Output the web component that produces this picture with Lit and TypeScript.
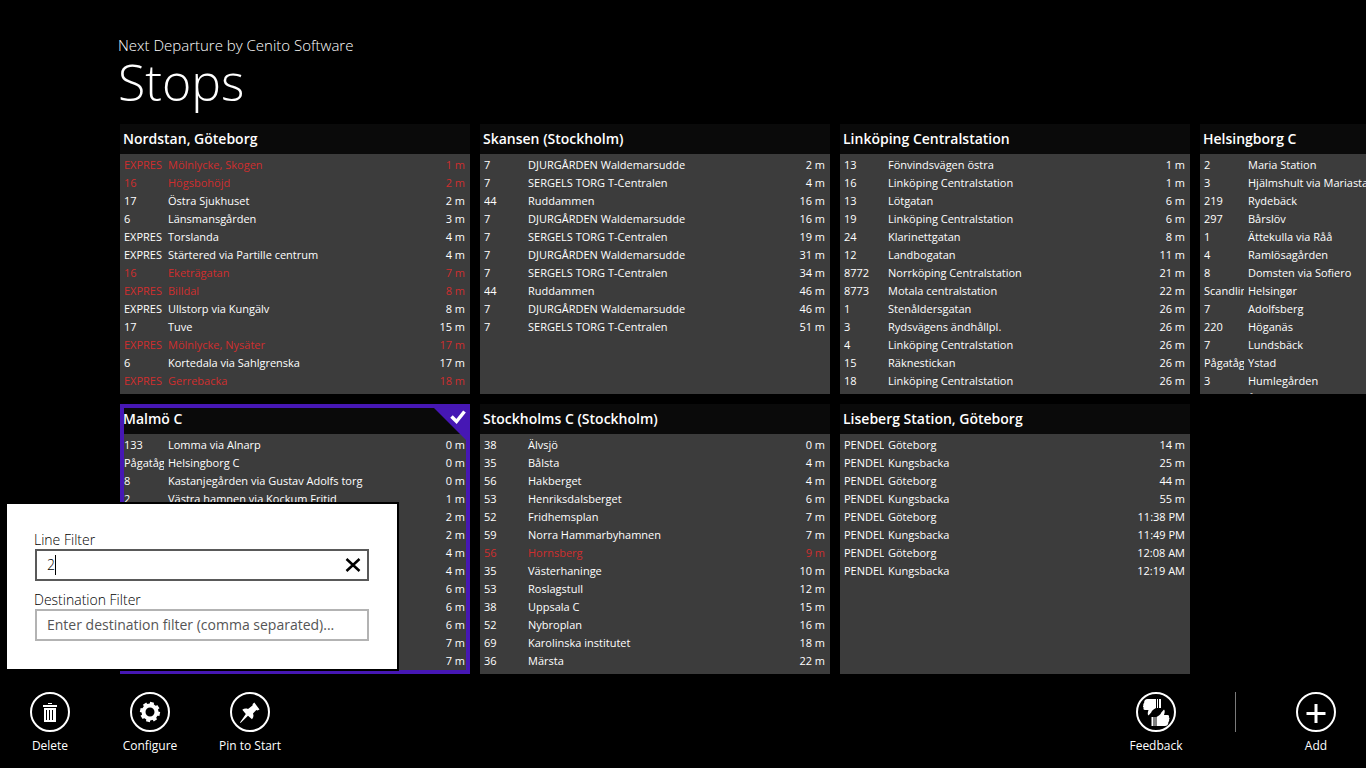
import { LitElement, html, css, svg, nothing } from "lit";
import { customElement, property } from "lit/decorators.js";
import { classMap } from "lit/directives/class-map.js";

interface Departure {
  line: string;
  destination: string;
  time: string;
  filtered?: boolean;
}

interface Stop {
  name: string;
  selected?: boolean;
  departures: Departure[];
}

// Each row reads "line|destination|time"; a leading "!" marks a highlighted departure.
const parse = (rows: string): Departure[] =>
  rows
    .trim()
    .split("\n")
    .map((row) => {
      const text = row.trim();
      const filtered = text.startsWith("!");
      const [line, destination, time] = (filtered ? text.slice(1) : text).split("|");
      return { line, destination, time, filtered };
    });

const STOPS: Stop[] = [
  {
    name: "Nordstan, Göteborg",
    departures: parse(`
      !EXPRES|Mölnlycke, Skogen|1 m
      !16|Högsbohöjd|2 m
      17|Östra Sjukhuset|2 m
      6|Länsmansgården|3 m
      EXPRES|Torslanda|4 m
      EXPRES|Stärtered via Partille centrum|4 m
      !16|Eketrägatan|7 m
      !EXPRES|Billdal|8 m
      EXPRES|Ullstorp via Kungälv|8 m
      17|Tuve|15 m
      !EXPRES|Mölnlycke, Nysäter|17 m
      6|Kortedala via Sahlgrenska|17 m
      !EXPRES|Gerrebacka|18 m`),
  },
  {
    name: "Malmö C",
    selected: true,
    departures: parse(`
      133|Lomma via Alnarp|0 m
      Pågatåg|Helsingborg C|0 m
      8|Kastanjegården via Gustav Adolfs torg|0 m
      2|Västra hamnen via Kockum Fritid|1 m
      ||2 m
      ||2 m
      ||4 m
      ||4 m
      ||6 m
      ||6 m
      ||6 m
      ||7 m
      ||7 m`),
  },
  {
    name: "Skansen (Stockholm)",
    departures: parse(`
      7|DJURGÅRDEN Waldemarsudde|2 m
      7|SERGELS TORG T-Centralen|4 m
      44|Ruddammen|16 m
      7|DJURGÅRDEN Waldemarsudde|16 m
      7|SERGELS TORG T-Centralen|19 m
      7|DJURGÅRDEN Waldemarsudde|31 m
      7|SERGELS TORG T-Centralen|34 m
      44|Ruddammen|46 m
      7|DJURGÅRDEN Waldemarsudde|46 m
      7|SERGELS TORG T-Centralen|51 m`),
  },
  {
    name: "Stockholms C (Stockholm)",
    departures: parse(`
      38|Älvsjö|0 m
      35|Bålsta|4 m
      56|Hakberget|4 m
      53|Henriksdalsberget|6 m
      52|Fridhemsplan|7 m
      59|Norra Hammarbyhamnen|7 m
      !56|Hornsberg|9 m
      35|Västerhaninge|10 m
      53|Roslagstull|12 m
      38|Uppsala C|15 m
      52|Nybroplan|16 m
      69|Karolinska institutet|18 m
      36|Märsta|22 m`),
  },
  {
    name: "Linköping Centralstation",
    departures: parse(`
      13|Fönvindsvägen östra|1 m
      16|Linköping Centralstation|1 m
      13|Lötgatan|6 m
      19|Linköping Centralstation|6 m
      24|Klarinettgatan|8 m
      12|Landbogatan|11 m
      8772|Norrköping Centralstation|21 m
      8773|Motala centralstation|22 m
      1|Stenåldersgatan|26 m
      3|Rydsvägens ändhållpl.|26 m
      4|Linköping Centralstation|26 m
      15|Räknestickan|26 m
      18|Linköping Centralstation|26 m`),
  },
  {
    name: "Liseberg Station, Göteborg",
    departures: parse(`
      PENDEL|Göteborg|14 m
      PENDEL|Kungsbacka|25 m
      PENDEL|Göteborg|44 m
      PENDEL|Kungsbacka|55 m
      PENDEL|Göteborg|11:38 PM
      PENDEL|Kungsbacka|11:49 PM
      PENDEL|Göteborg|12:08 AM
      PENDEL|Kungsbacka|12:19 AM`),
  },
  {
    name: "Helsingborg C",
    departures: parse(`
      2|Maria Station|
      3|Hjälmshult via Mariastaden|
      219|Rydebäck|
      297|Bårslöv|
      1|Ättekulla via Råå|
      4|Ramlösagården|
      8|Domsten via Sofiero|
      Scandlin|Helsingør|
      7|Adolfsberg|
      220|Höganäs|
      7|Lundsbäck|
      Pågatåg|Ystad|
      3|Humlegården|
      |Ångelholm|`),
  },
];

const THUMB =
  "M20 7v9c-2.500 1.200-4 2.500-4.800 4.500l-2.700 3c-1.200-1.200-.8-3.200 0-5.500H9c-1.500-.2-2-1.300-1.300-2.300C6.800 15 6.800 14 7.500 13.300c-.4-.8-.2-1.700.6-2.300C8 8.500 9.500 7 11.500 7zM21 7h1v9h-1zM23 7h2v9h-2z";

const ICONS = {
  delete: svg`
    <path d="M18 11h4v1h-4zM13 13h14v2H13z" />
    <path fill-rule="evenodd" d="M14 16h12v14H14zM16 18v10h1V18zM19 18v10h1V18zM22 18v10h1V18z" />`,
  configure: svg`
    <circle cx="20" cy="20" r="6.500" fill="none" stroke="currentColor" stroke-width="4" />
    ${[0, 45, 90, 135, 180, 225, 270, 315].map(
      (angle) => svg`<path d="M18 10h4v4h-4z" transform=${`rotate(${angle + 12} 20 20)`} />`
    )}`,
  pin: svg`
    <path d="M24.300 10.500l5.200 7-2 .9-1.200-.5-3.300 3.600c.9 2.200.5 4-1 5.800l-4-3.500-7.500 7.200-.5-.5L15.800 22l-3.500-4.200c1.700-1.300 3.700-1.500 5.700-.8l4.500-3.500.2-1.600z" />`,
  feedback: svg`
    <path d=${THUMB} />
    <path d=${THUMB} transform="rotate(180 20.250 20.500)" />`,
  add: svg`<path d="M18.500 12h3v8h8v3h-8v8h-3v-8h-8v-3h8z" />`,
};

@customElement("stop-tile")
export class StopTile extends LitElement {
  @property({ attribute: false }) stop!: Stop;

  static styles = css`
    :host {
      display: block;
      min-width: 0;
    }
    .tile {
      position: relative;
      height: 100%;
      display: flex;
      flex-direction: column;
      overflow: hidden;
      background: #3c3c3c;
    }
    .name {
      flex: none;
      margin: 0;
      padding: 0 3px;
      background: #0a0a0a;
      font-size: 14px;
      font-weight: 600;
      line-height: 30px;
    }
    .board {
      width: 100%;
      margin-top: 2px;
      border-collapse: collapse;
      table-layout: fixed;
      font-size: 11px;
    }
    .cell {
      height: 18px;
      padding: 0;
      line-height: 18px;
      text-align: left;
      white-space: nowrap;
      overflow: hidden;
    }
    .line {
      width: 40px;
      padding: 0 0 0 4px;
    }
    .clip {
      display: block;
      width: 40px;
      overflow: hidden;
    }
    .destination {
      padding-left: 4px;
    }
    .time {
      width: 62px;
      padding-right: 5px;
      text-align: right;
    }
    .filtered {
      color: #cf2e2e;
    }
    .selected::after {
      content: "";
      position: absolute;
      inset: 0;
      border: 4px solid #4617b4;
      pointer-events: none;
    }
    .check {
      position: absolute;
      top: 0;
      right: 0;
      width: 40px;
      height: 40px;
    }
  `;

  render() {
    const { name, selected, departures } = this.stop;
    return html`
      <article class=${classMap({ tile: true, selected: !!selected })}>
        <h2 class="name">${name}</h2>
        ${selected
          ? html`<svg class="check" viewBox="0 0 40 40" aria-hidden="true">
              <path d="M0 0H40V40z" fill="#4617b4" />
              <path d="M21.500 12.500l5 5L34.500 7.500" fill="none" stroke="#fff" stroke-width="3.500" />
            </svg>`
          : nothing}
        <table class="board" aria-label=${name}>
          <tbody>
            ${departures.map(
              (d) => html`
                <tr class=${classMap({ filtered: !!d.filtered })}>
                  <td class="cell line"><span class="clip">${d.line}</span></td>
                  <td class="cell destination">${d.destination}</td>
                  <td class="cell time">${d.time}</td>
                </tr>
              `
            )}
          </tbody>
        </table>
      </article>
    `;
  }
}

@customElement("command-button")
export class CommandButton extends LitElement {
  @property() icon: keyof typeof ICONS = "add";
  @property() label = "";

  static styles = css`
    :host {
      display: block;
      width: 100px;
    }
    .command {
      display: flex;
      flex-direction: column;
      align-items: center;
      width: 100%;
      padding: 0;
      border: 0;
      background: none;
      color: #fff;
      font: inherit;
      line-height: 18px;
      white-space: nowrap;
    }
    .glyph {
      width: 40px;
      height: 40px;
      margin-bottom: 5px;
      fill: currentColor;
    }
  `;

  render() {
    return html`
      <button class="command" type="button">
        <svg class="glyph" viewBox="0 0 40 40" aria-hidden="true">
          <circle cx="20" cy="20" r="19" fill="none" stroke="currentColor" stroke-width="2" />
          ${ICONS[this.icon]}
        </svg>
        ${this.label}
      </button>
    `;
  }
}

@customElement("filter-flyout")
export class FilterFlyout extends LitElement {
  static styles = css`
    :host {
      display: block;
    }
    .flyout {
      box-sizing: border-box;
      width: 394px;
      padding: 27px 28px 28px 27px;
      border: 2px solid #000;
      background: #fff;
      color: #000;
      font-size: 14px;
      font-weight: 300;
    }
    .label {
      display: block;
      line-height: 18px;
    }
    .field {
      position: relative;
      display: flex;
      align-items: center;
      box-sizing: border-box;
      height: 32px;
      margin-left: 1px;
      border: 2px solid #b3b3b3;
    }
    .field + .label {
      margin-top: 10px;
    }
    .active {
      border-color: #595959;
    }
    .input {
      flex: 1;
      min-width: 0;
      padding: 0 10px;
      border: 0;
      outline: 0;
      background: none;
      color: #000;
      font: inherit;
      line-height: 20px;
      caret-color: transparent;
    }
    .input::placeholder {
      color: #555;
      font-weight: 400;
      opacity: 1;
    }
    .caret {
      position: absolute;
      left: 18px;
      top: 4px;
      width: 1px;
      height: 20px;
      background: #000;
    }
    .clear {
      display: flex;
      padding: 0 6px;
      border: 0;
      background: none;
    }
    .cross {
      width: 16px;
      height: 16px;
    }
  `;

  render() {
    return html`
      <form class="flyout">
        <label class="label" for="line">Line Filter</label>
        <div class="field active">
          <input class="input" id="line" type="text" .value=${"2"} />
          <span class="caret"></span>
          <button class="clear" type="button" aria-label="Clear">
            <svg class="cross" viewBox="0 0 16 16" aria-hidden="true">
              <path d="M1.500 2l13 12M14.500 2l-13 12" fill="none" stroke="#000" stroke-width="2.500" />
            </svg>
          </button>
        </div>
        <label class="label" for="destination">Destination Filter</label>
        <div class="field">
          <input
            class="input"
            id="destination"
            type="text"
            placeholder="Enter destination filter (comma separated)..."
          />
        </div>
      </form>
    `;
  }
}

@customElement("app-root")
export class AppRoot extends LitElement {
  static styles = css`
    :host {
      display: flex;
      flex-direction: column;
      position: relative;
      box-sizing: border-box;
      min-height: 100vh;
      overflow: hidden;
      background: #000;
      color: #fff;
      font-family: "Open Sans", "Noto Sans", sans-serif;
      font-size: 12px;
    }
    .header {
      padding: 35px 118px 14px;
    }
    .owner {
      margin: 0;
      font-size: 15px;
      font-weight: 300;
      line-height: 20px;
    }
    .title {
      margin: 0;
      font-size: 50px;
      font-weight: 300;
      line-height: 55px;
    }
    .stops {
      display: grid;
      grid-auto-flow: column;
      grid-template-rows: repeat(2, 270px);
      grid-auto-columns: 350px;
      gap: 10px;
      padding-left: 120px;
      overflow: hidden;
    }
    .commands {
      display: flex;
      margin-top: auto;
      padding: 18px 0 13px;
    }
    .spacer {
      flex: 1;
    }
    .divider {
      width: 1px;
      height: 40px;
      margin: 0 30px 0 29px;
      background: #7a7a7a;
    }
    .popup {
      position: absolute;
      left: 5px;
      bottom: 97px;
    }
  `;

  render() {
    return html`
      <header class="header">
        <p class="owner">Next Departure by Cenito Software</p>
        <h1 class="title">Stops</h1>
      </header>
      <main class="stops">${STOPS.map((stop) => html`<stop-tile .stop=${stop}></stop-tile>`)}</main>
      <footer class="commands">
        <command-button icon="delete" label="Delete"></command-button>
        <command-button icon="configure" label="Configure"></command-button>
        <command-button icon="pin" label="Pin to Start"></command-button>
        <div class="spacer"></div>
        <command-button icon="feedback" label="Feedback"></command-button>
        <div class="divider"></div>
        <command-button icon="add" label="Add"></command-button>
      </footer>
      <filter-flyout class="popup"></filter-flyout>
    `;
  }
}
